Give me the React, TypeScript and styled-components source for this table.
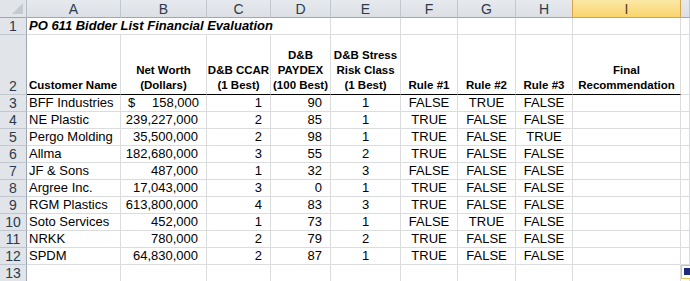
import styled, { createGlobalStyle } from "styled-components";

const GlobalStyle = createGlobalStyle`
    html, body {
        margin:0;
        padding:0;
        background:#ffffff;
    }
`;

type Row = [string, string, string, string, string, string, string, string];

const rows: Row[] = [
    ["BFF Industries", "158,000", "1", "90", "1", "FALSE", "TRUE", "FALSE"],
    ["NE Plastic", "239,227,000", "2", "85", "1", "TRUE", "FALSE", "FALSE"],
    ["Pergo Molding", "35,500,000", "2", "98", "1", "TRUE", "FALSE", "TRUE"],
    ["Allma", "182,680,000", "3", "55", "2", "TRUE", "FALSE", "FALSE"],
    ["JF & Sons", "487,000", "1", "32", "3", "FALSE", "FALSE", "FALSE"],
    ["Argree Inc.", "17,043,000", "3", "0", "1", "TRUE", "FALSE", "FALSE"],
    ["RGM Plastics", "613,800,000", "4", "83", "3", "TRUE", "FALSE", "FALSE"],
    ["Soto Services", "452,000", "1", "73", "1", "FALSE", "TRUE", "FALSE"],
    ["NRKK", "780,000", "2", "79", "2", "TRUE", "FALSE", "FALSE"],
    ["SPDM", "64,830,000", "2", "87", "1", "TRUE", "FALSE", "FALSE"],
];

const letters = ["A", "B", "C", "D", "E", "F", "G", "H", "I", ""];

const headings = [
    "Customer Name",
    "Net Worth\n(Dollars)",
    "D&B CCAR\n(1 Best)",
    "D&B\nPAYDEX\n(100 Best)",
    "D&B Stress\nRisk Class\n(1 Best)",
    "Rule #1",
    "Rule #2",
    "Rule #3",
    "Final\nRecommendation",
];

// alignment per data column A..H
const aligns: Align[] = ["left", "right", "right", "right", "center", "center", "center", "center"];

type Align = "left" | "right" | "center";

export default function App() {
    return (
        <>
            <GlobalStyle />
            <SSheet>
                <SCorner>
                    <STriangle />
                </SCorner>
                {letters.map((l, i) => (
                    <SColHead key={"h" + i} selected={l === "I"}>{l}</SColHead>
                ))}

                <SRowHead>1</SRowHead>
                <STitle>PO 611 Bidder List Financial Evaluation</STitle>
                {Array.from({ length: 6 }).map((_, i) => <SCell key={"t" + i} align="left" />)}

                <SRowHead>2</SRowHead>
                {headings.map((h, i) => (
                    <SHeadCell key={"hd" + i} align={i === 0 ? "left" : "center"}>{h}</SHeadCell>
                ))}
                <SCell align="left" />

                {rows.map((r, ri) => (
                    <SRowGroup key={"r" + ri}>
                        <SRowHead>{ri + 3}</SRowHead>
                        {r.map((v, ci) =>
                            ci === 1 && ri === 0 ? (
                                <SMoneyCell key={ci}>
                                    <span>$</span>
                                    <span>{v}</span>
                                </SMoneyCell>
                            ) : (
                                <SCell key={ci} align={aligns[ci]} pad={ci >= 1 && ci <= 3}>{v}</SCell>
                            )
                        )}
                        <SCell align="left" />
                        <SCell align="left" />
                    </SRowGroup>
                ))}

                <SRowHead>13</SRowHead>
                {Array.from({ length: 10 }).map((_, i) => <SCell key={"e" + i} align="left" />)}
            </SSheet>
            <SPasteIcon />
        </>
    );
}

const SSheet = styled.div`
    display:grid;
    grid-template-columns:27px 94px 86px 64px 60px 70px 57px 58px 57px 108px 1fr;
    grid-template-rows:18px 17px 60px repeat(11, 17px);
    width:690px;
    height:281px;
    overflow:hidden;
    font-family:"Liberation Sans", Arial, sans-serif;
    color:#000;
`;

const SRowGroup = styled.div`
    display:contents;
`;

const SCorner = styled.div`
    position:relative;
    box-sizing:border-box;
    background:#e1e5ea;
    border-right:1px solid #b4bcc6;
    border-bottom:1px solid #9ea8b4;
`;

const STriangle = styled.div`
    position:absolute;
    right:3px;
    bottom:3px;
    width:0;
    height:0;
    border-left:11px solid transparent;
    border-bottom:11px solid #c4cad2;
`;

const SColHead = styled.div<{ selected?: boolean }>`
    box-sizing:border-box;
    display:flex;
    align-items:center;
    justify-content:center;
    font-size:14px;
    color:${({ selected }) => (selected ? "#5a3a1a" : "#2c3a4c")};
    background:${({ selected }) =>
        selected ? "linear-gradient(#fbe9a6, #f8d46c)" : "linear-gradient(#e6e9ed, #dcdfe4)"};
    border-right:1px solid ${({ selected }) => (selected ? "#d9a24c" : "#c1c7cf")};
    border-bottom:1px solid ${({ selected }) => (selected ? "#d9a24c" : "#9ea8b4")};
    ${({ selected }) => (selected ? "border-left:1px solid #d9a24c; margin-left:-1px;" : "")}
`;

const SRowHead = styled.div`
    box-sizing:border-box;
    display:flex;
    align-items:flex-end;
    justify-content:center;
    padding-bottom:0;
    font-size:14px;
    line-height:16px;
    color:#2c3a4c;
    background:#e1e5ea;
    border-right:1px solid #9ea8b4;
    border-bottom:1px solid #c1c7cf;
`;

const SCell = styled.div<{ align: Align; pad?: boolean }>`
    box-sizing:border-box;
    display:flex;
    align-items:flex-end;
    justify-content:${({ align }) =>
        align === "left" ? "flex-start" : align === "right" ? "flex-end" : "center"};
    padding:0 ${({ pad }) => (pad ? "8px" : "2px")} 0 2px;
    font-size:13px;
    line-height:16px;
    white-space:nowrap;
    overflow:hidden;
    border-right:1px solid #dadcdd;
    border-bottom:1px solid #dadcdd;
`;

const SMoneyCell = styled(SCell).attrs({ align: "left" as Align })`
    justify-content:space-between;
    padding:0 7px 0 7px;
`;

const STitle = styled.div`
    grid-column:span 4;
    box-sizing:border-box;
    display:flex;
    align-items:flex-end;
    padding:0 2px;
    font-size:13px;
    line-height:16px;
    font-weight:bold;
    font-style:italic;
    white-space:nowrap;
    border-right:1px solid #dadcdd;
    border-bottom:1px solid #dadcdd;
`;

const SHeadCell = styled.div<{ align: Align }>`
    box-sizing:border-box;
    display:flex;
    align-items:flex-end;
    justify-content:${({ align }) => (align === "left" ? "flex-start" : "center")};
    text-align:${({ align }) => align};
    padding:0 2px 1px 2px;
    font-size:11.5px;
    line-height:15px;
    font-weight:bold;
    white-space:pre;
    border-right:1px solid #dadcdd;
    border-bottom:1px solid #000;
`;

const SPasteIcon = styled.div`
    position:absolute;
    left:681px;
    top:265px;
    width:12px;
    height:14px;
    box-sizing:border-box;
    border:1px solid #e8c25a;
    background:#fff;
    &::after{
        content:"";
        position:absolute;
        left:2px;
        top:2px;
        width:7px;
        height:7px;
        background:#1d2a7a;
    }
`;
